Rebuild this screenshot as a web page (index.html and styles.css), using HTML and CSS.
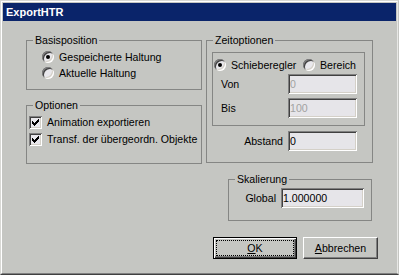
FILE: index.html
```html
<!DOCTYPE html>
<html lang="de">
<head>
    <meta charset="UTF-8">
    <title>ExportHTR</title>
    <link rel="stylesheet" href="styles.css">
</head>
<body>
    <div class="window">
        <div class="frame">
            <div class="titlebar">ExportHTR</div>
            <div class="client">
                <div class="columns">
                    <div class="col-left">
                        <div class="group basis">
                            <span class="legend">Basisposition</span>
                            <div class="option-list">
                                <div class="option"><span class="radio checked"></span>Gespeicherte Haltung</div>
                                <div class="option"><span class="radio"></span>Aktuelle Haltung</div>
                            </div>
                        </div>
                        <div class="group optionen">
                            <span class="legend">Optionen</span>
                            <div class="option-list">
                                <div class="option">
                                    <span class="checkbox"><svg width="13" height="13" viewBox="0 0 13 13"><path d="M3 5h1v3h-1zM4 6h1v3h-1zM5 7h1v3h-1zM6 6h1v3h-1zM7 5h1v3h-1zM8 4h1v3h-1zM9 3h1v3h-1z" fill="#000"/></svg></span>Animation exportieren
                                </div>
                                <div class="option">
                                    <span class="checkbox"><svg width="13" height="13" viewBox="0 0 13 13"><path d="M3 5h1v3h-1zM4 6h1v3h-1zM5 7h1v3h-1zM6 6h1v3h-1zM7 5h1v3h-1zM8 4h1v3h-1zM9 3h1v3h-1z" fill="#000"/></svg></span>Transf. der übergeordn. Objekte
                                </div>
                            </div>
                        </div>
                    </div>
                    <div class="group zeit">
                        <span class="legend">Zeitoptionen</span>
                        <div class="inner-box">
                            <div class="option-line">
                                <div class="option slider"><span class="radio checked"></span>Schieberegler</div>
                                <div class="option"><span class="radio"></span>Bereich</div>
                            </div>
                            <div class="field von">
                                <span class="field-label">Von</span>
                                <input class="edit" type="text" value="0" disabled>
                            </div>
                            <div class="field bis">
                                <span class="field-label">Bis</span>
                                <input class="edit" type="text" value="100" disabled>
                            </div>
                        </div>
                        <div class="field abstand">
                            <span class="field-label">Abstand</span>
                            <input class="edit" type="text" value="0">
                        </div>
                    </div>
                </div>
                <div class="group skalierung">
                    <span class="legend">Skalierung</span>
                    <div class="field global">
                        <span class="field-label">Global</span>
                        <input class="edit" type="text" value="1.000000">
                    </div>
                </div>
                <div class="buttons">
                    <button class="btn default"><span class="focus"><u>O</u>K</span></button>
                    <button class="btn cancel"><u>A</u>bbrechen</button>
                </div>
            </div>
        </div>
    </div>
</body>
</html>
```

FILE: styles.css
```css
body {
    margin: 0;
    font-family: 'Liberation Sans', Arial, sans-serif;
    font-size: 10.6px;
    color: #000;
    background-color: #c5c6c2;
}
.window {
    width: 399px;
    height: 275px;
    box-sizing: border-box;
    background-color: #c5c6c2;
    border: 1px solid;
    border-color: #d8d8d4 #c5c6c2 #404040 #d8d8d4;
}
.frame {
    height: 100%;
    box-sizing: border-box;
    border: 1px solid;
    border-color: #fff #e8e8e6 #808080 #fff;
    padding: 1px;
}
.titlebar {
    height: 18px;
    line-height: 18px;
    padding-left: 3px;
    background-color: #0a246a;
    color: #fff;
    font-size: 11px;
    font-weight: bold;
}
.client {
    padding: 19px 0 0 23px;
}
.columns {
    display: flex;
    gap: 4px;
}
.col-left {
    width: 176px;
}
.group {
    box-sizing: border-box;
    border: 1px solid #858684;
}
.legend {
    display: block;
    width: fit-content;
    margin: -7px 0 0 6px;
    padding: 0 2px;
    line-height: 12px;
    background-color: #c5c6c2;
}
.option-list {
    padding-top: 3px;
    display: flex;
    flex-direction: column;
}
.option {
    display: flex;
    align-items: center;
    height: 16px;
    white-space: nowrap;
}
.basis {
    height: 50px;
}
.basis .radio {
    margin-left: 15px;
}
.optionen {
    height: 59px;
    margin-top: 15px;
}
.optionen .option-list {
    gap: 1px;
}
.radio {
    width: 12px;
    height: 12px;
    margin-right: 5px;
    border-radius: 50%;
    background-color: #e9e8ec;
    box-shadow: inset 1px 1px 0 #808080, inset -1px -1px 0 #fff, inset 2px 2px 0 #404040, inset -2px -2px 0 #d4d0c8;
}
.radio.checked::after {
    content: '';
    display: block;
    width: 4px;
    height: 4px;
    margin: 4px;
    border-radius: 50%;
    background-color: #000;
}
.checkbox {
    width: 13px;
    height: 13px;
    margin: 0 5px 0 2px;
    background-color: #e9e8ec;
    box-shadow: inset 1px 1px 0 #808080, inset -1px -1px 0 #fff, inset 2px 2px 0 #404040, inset -2px -2px 0 #d4d0c8;
}
.checkbox svg {
    display: block;
}
.zeit {
    width: 167px;
    height: 123px;
}
.inner-box {
    box-sizing: border-box;
    height: 74px;
    margin: 6px 7px 0 5px;
    border: 1px solid #858684;
}
.option-line {
    display: flex;
    padding: 4px 0 0 1px;
}
.slider {
    width: 89px;
}
.field {
    display: flex;
    align-items: center;
}
.field-label {
    white-space: nowrap;
}
.edit {
    box-sizing: border-box;
    width: 69px;
    height: 20px;
    margin: 0;
    padding: 0 2px;
    border: none;
    font-family: inherit;
    font-size: 10.6px;
    color: #000;
    background-color: #e6e5e9;
    box-shadow: inset 1px 1px 0 #808080, inset -1px -1px 0 #fff, inset 2px 2px 0 #404040, inset -2px -2px 0 #d4d0c8;
}
.edit:disabled {
    color: #a2a2a2;
}
.von {
    margin-top: 1px;
}
.bis {
    margin-top: 4px;
}
.von .field-label,
.bis .field-label {
    width: 67px;
    margin-left: 8px;
}
.abstand {
    margin-top: 5px;
}
.abstand .field-label {
    width: 76px;
    margin-right: 5px;
    text-align: right;
}
.skalierung {
    width: 144px;
    height: 42px;
    margin: 15px 0 0 202px;
}
.global {
    margin-top: 3px;
}
.global .field-label {
    width: 47px;
    margin-right: 5px;
    text-align: right;
}
.global .edit {
    width: 83px;
}
.buttons {
    display: flex;
    gap: 6px;
    margin-top: 16px;
    padding-left: 187px;
}
.btn {
    box-sizing: border-box;
    height: 22px;
    padding: 0;
    font-family: inherit;
    font-size: 10.6px;
    color: #000;
    background-color: #c5c6c2;
    border: 1px solid;
    border-color: #fff #404040 #404040 #fff;
    box-shadow: inset -1px -1px 0 #808080;
}
.btn.default {
    width: 84px;
    padding: 2px;
    border: 1px solid #000;
    box-shadow: inset 1px 1px 0 #fff, inset -1px -1px 0 #404040, inset -2px -2px 0 #808080;
}
.btn.cancel {
    width: 75px;
}
.focus {
    display: flex;
    align-items: center;
    justify-content: center;
    height: 100%;
    box-sizing: border-box;
    border: 1px dotted #000;
}
```
